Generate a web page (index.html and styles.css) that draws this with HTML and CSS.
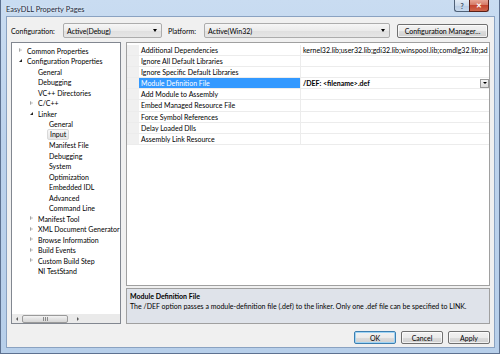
FILE: index.html
```html
<!DOCTYPE html>
<html lang="en">
<head>
  <meta charset="UTF-8">
  <title>EasyDLL Property Pages</title>
  <link rel="stylesheet" href="styles.css">
</head>
<body>
  <div class="window">
    <div class="titlebar">
      <span class="title">EasyDLL Property Pages</span>
      <div class="caption-buttons">
        <span class="cap help">?</span>
        <span class="cap close">&#x2715;</span>
      </div>
    </div>
    <div class="client">
      <div class="config-row">
        <label class="lbl cfg-lbl">Configuration:</label>
        <div class="combo cfg-combo"><span>Active(Debug)</span><span class="arrow"></span></div>
        <label class="lbl plat-lbl">Platform:</label>
        <div class="combo plat-combo"><span>Active(Win32)</span><span class="arrow"></span></div>
        <button class="btn cfg-btn">Configuration Manager...</button>
      </div>

      <div class="main">
        <div class="tree">
          <ul class="tree-items">
            <li class="l0"><span class="tw closed"></span>Common Properties</li>
            <li class="l0"><span class="tw open"></span>Configuration Properties</li>
            <li class="l1"><span class="tw"></span>General</li>
            <li class="l1"><span class="tw"></span>Debugging</li>
            <li class="l1"><span class="tw"></span>VC++ Directories</li>
            <li class="l1"><span class="tw closed"></span>C/C++</li>
            <li class="l1"><span class="tw open"></span>Linker</li>
            <li class="l2"><span class="tw"></span>General</li>
            <li class="l2"><span class="tw"></span><span class="sel">Input</span></li>
            <li class="l2"><span class="tw"></span>Manifest File</li>
            <li class="l2"><span class="tw"></span>Debugging</li>
            <li class="l2"><span class="tw"></span>System</li>
            <li class="l2"><span class="tw"></span>Optimization</li>
            <li class="l2"><span class="tw"></span>Embedded IDL</li>
            <li class="l2"><span class="tw"></span>Advanced</li>
            <li class="l2"><span class="tw"></span>Command Line</li>
            <li class="l1"><span class="tw closed"></span>Manifest Tool</li>
            <li class="l1"><span class="tw closed"></span>XML Document Generator</li>
            <li class="l1"><span class="tw closed"></span>Browse Information</li>
            <li class="l1"><span class="tw closed"></span>Build Events</li>
            <li class="l1"><span class="tw closed"></span>Custom Build Step</li>
            <li class="l1"><span class="tw"></span>NI TestStand</li>
          </ul>
          <div class="hscroll">
            <span class="sarrow left"></span>
            <div class="track"><div class="thumb"><span class="grip"></span></div></div>
            <span class="sarrow right"></span>
          </div>
        </div>

        <div class="right">
          <div class="grid">
            <div class="row"><div class="gutter"></div><div class="name">Additional Dependencies</div><div class="value">kernel32.lib;user32.lib;gdi32.lib;winspool.lib;comdlg32.lib;ad</div></div>
            <div class="row"><div class="gutter"></div><div class="name">Ignore All Default Libraries</div><div class="value"></div></div>
            <div class="row"><div class="gutter"></div><div class="name">Ignore Specific Default Libraries</div><div class="value"></div></div>
            <div class="row selected"><div class="gutter"></div><div class="name">Module Definition File</div><div class="value"><span class="val-text">/DEF: &lt;filename&gt;.def</span><span class="drop"></span></div></div>
            <div class="row"><div class="gutter"></div><div class="name">Add Module to Assembly</div><div class="value"></div></div>
            <div class="row"><div class="gutter"></div><div class="name">Embed Managed Resource File</div><div class="value"></div></div>
            <div class="row"><div class="gutter"></div><div class="name">Force Symbol References</div><div class="value"></div></div>
            <div class="row"><div class="gutter"></div><div class="name">Delay Loaded Dlls</div><div class="value"></div></div>
            <div class="row"><div class="gutter"></div><div class="name">Assembly Link Resource</div><div class="value"></div></div>
          </div>
          <div class="description">
            <div class="desc-title">Module Definition File</div>
            <div class="desc-text">The /DEF option passes a module-definition file (.def) to the linker. Only one .def file can be specified to LINK.</div>
          </div>
        </div>
      </div>

      <div class="buttons">
        <button class="btn default">OK</button>
        <button class="btn">Cancel</button>
        <button class="btn">Apply</button>
      </div>
    </div>
  </div>
</body>
</html>
```

FILE: styles.css
```css
* {
  box-sizing: border-box;
}

html, body {
  margin: 0;
  padding: 0;
}

body {
  width: 500px;
  height: 354px;
  font-family: Lato, 'Open Sans', sans-serif;
  font-size: 7px;
  color: #000;
  overflow: hidden;
}

.window {
  width: 500px;
  height: 354px;
  display: flex;
  flex-direction: column;
  background: linear-gradient(180deg, #c9dcf1 0%, #bcd2ec 40%, #b7cfea 100%);
  border: 1px solid #5d7190;
  border-top: none;
  padding: 0 4px 5px 5px;
}

.titlebar {
  height: 16px;
  display: flex;
  align-items: flex-start;
}

.title {
  margin-top: 5px;
  font-size: 7.4px;
  color: #1e2a3a;
  text-shadow: 0 0 3px rgba(255, 255, 255, 0.9);
}

.caption-buttons {
  margin-left: auto;
  margin-right: 6px;
  display: flex;
}

.cap {
  height: 12px;
  display: flex;
  align-items: center;
  justify-content: center;
  font-size: 7px;
  border: 1px solid #4f6178;
  border-top: none;
}

.help {
  width: 15px;
  border-right: none;
  border-bottom-left-radius: 3px;
  background: linear-gradient(180deg, #e3ecf6 0%, #cbdaeb 50%, #b8cbe2 51%, #c9daee 100%);
  color: #3c4f68;
  font-weight: bold;
}

.close {
  width: 20px;
  border-color: #5a2018;
  border-bottom-right-radius: 3px;
  background: linear-gradient(180deg, #e7a493 0%, #d57a66 45%, #c4452f 50%, #d0674c 100%);
  color: #fff;
  font-size: 6.5px;
  font-weight: bold;
}

.client {
  flex: 1;
  display: flex;
  flex-direction: column;
  background: #f0f0f0;
  border: 1px solid #8aa2c1;
  padding: 6px 4px 3px 4px;
}

/* configuration row */
.config-row {
  height: 15px;
  display: flex;
  align-items: center;
}

.lbl {
  white-space: nowrap;
}

.cfg-lbl {
  width: 52px;
}

.plat-lbl {
  width: 36px;
  margin-left: 6px;
}

.combo {
  height: 15px;
  display: flex;
  align-items: center;
  padding: 0 4px 0 3px;
  border: 1px solid #acacac;
  border-radius: 2px;
  background: linear-gradient(180deg, #f6f6f6 0%, #ebebeb 50%, #dfdfdf 51%, #e6e6e6 100%);
}

.cfg-combo {
  width: 99px;
}

.plat-combo {
  width: 186px;
}

.combo .arrow {
  margin-left: auto;
  width: 0;
  height: 0;
  border-left: 2.5px solid transparent;
  border-right: 2.5px solid transparent;
  border-top: 3px solid #000;
}

.btn {
  font-family: inherit;
  font-size: 7px;
  height: 14px;
  padding: 0;
  border: 1px solid #707070;
  border-radius: 2px;
  background: linear-gradient(180deg, #f2f2f2 0%, #ebebeb 50%, #dddddd 51%, #cfcfcf 100%);
  color: #000;
  box-shadow: inset 0 0 0 1px rgba(255, 255, 255, 0.7);
}

.cfg-btn {
  width: 91px;
  margin-left: 7px;
}

/* main area */
.main {
  flex: 1;
  display: flex;
  margin-top: 4px;
  min-height: 0;
}

.tree {
  width: 110px;
  display: flex;
  flex-direction: column;
  background: #fff;
  border: 1px solid #828790;
}

.tree-items {
  flex: 1;
  list-style: none;
  margin: 0;
  padding: 2.5px 0 0 0;
}

.tree-items li {
  height: 10.5px;
  line-height: 10.5px;
  display: flex;
  align-items: center;
  white-space: nowrap;
}

.l0 { padding-left: 6px; }
.l1 { padding-left: 17px; }
.l2 { padding-left: 28px; }

.tw {
  width: 9px;
  height: 10px;
  flex: none;
  position: relative;
}

.tw.closed::before {
  content: "";
  position: absolute;
  left: 1px;
  top: 2.5px;
  width: 0;
  height: 0;
  border-top: 2.5px solid transparent;
  border-bottom: 2.5px solid transparent;
  border-left: 3px solid #a6a6a6;
}

.tw.closed::after {
  content: "";
  position: absolute;
  left: 1.8px;
  top: 3.6px;
  width: 0;
  height: 0;
  border-top: 1.4px solid transparent;
  border-bottom: 1.4px solid transparent;
  border-left: 1.6px solid #fff;
}

.tw.open::before {
  content: "";
  position: absolute;
  left: 1px;
  top: 3px;
  width: 0;
  height: 0;
  border-left: 3.5px solid transparent;
  border-bottom: 3.5px solid #262626;
}

.sel {
  margin-left: -2px;
  padding: 0 2px;
  line-height: 9px;
  border: 1px solid #d9d9d9;
  border-radius: 2px;
  background: linear-gradient(180deg, #f8f8f8 0%, #e5e5e5 100%);
}

.hscroll {
  height: 9px;
  display: flex;
  align-items: center;
  background: #eaeaea;
  padding: 0 1px;
}

.sarrow {
  width: 9px;
  height: 9px;
  position: relative;
}

.sarrow.left::before,
.sarrow.right::before {
  content: "";
  position: absolute;
  top: 2.5px;
  width: 0;
  height: 0;
  border-top: 2px solid transparent;
  border-bottom: 2px solid transparent;
}

.sarrow.left::before {
  left: 3px;
  border-right: 2.5px solid #5a5a5a;
}

.sarrow.right::before {
  left: 4px;
  border-left: 2.5px solid #5a5a5a;
}

.track {
  flex: 1;
  height: 9px;
  display: flex;
  align-items: center;
}

.thumb {
  width: 100%;
  height: 8px;
  border: 1px solid #9a9a9a;
  border-radius: 2px;
  background: linear-gradient(180deg, #f3f3f3 0%, #e2e2e2 50%, #d6d6d6 100%);
  display: flex;
  align-items: center;
  justify-content: center;
}

.grip {
  width: 5px;
  height: 4px;
  background: repeating-linear-gradient(90deg, #8a8a8a 0 1px, transparent 1px 2px);
}

/* property grid */
.right {
  flex: 1;
  margin-left: 5px;
  display: flex;
  flex-direction: column;
  min-width: 0;
}

.grid {
  flex: 1;
  background: #fff;
  border: 1px solid #a0a0a0;
  padding-top: 2px;
  overflow: hidden;
}

.row {
  height: 11.1px;
  display: flex;
  border-bottom: 1px solid #ececec;
}

.gutter {
  width: 12px;
  flex: none;
  background: #f0f0f0;
}

.name {
  width: 162px;
  flex: none;
  padding-left: 2px;
  line-height: 10px;
  white-space: nowrap;
  border-right: 1px solid #ececec;
}

.value {
  flex: 1;
  min-width: 0;
  display: flex;
  align-items: center;
  padding-left: 2px;
  white-space: nowrap;
  overflow: hidden;
}

.row.selected .name {
  background: #3399ff;
  color: #fff;
}

.val-text {
  font-weight: bold;
}

.drop {
  margin-left: auto;
  width: 9px;
  height: 9px;
  flex: none;
  border: 1px solid #9a9a9a;
  background: linear-gradient(180deg, #f4f4f4 0%, #dcdcdc 100%);
  display: flex;
  align-items: center;
  justify-content: center;
}

.drop::before {
  content: "";
  width: 0;
  height: 0;
  border-left: 2px solid transparent;
  border-right: 2px solid transparent;
  border-top: 2.5px solid #000;
}

.description {
  height: 36px;
  margin-top: 2px;
  border: 1px solid #a0a0a0;
  background: #dfe3ea;
  padding: 2px 3px;
  line-height: 10px;
}

.desc-title {
  font-weight: bold;
}

.desc-text {
  white-space: nowrap;
}

/* dialog buttons */
.buttons {
  display: flex;
  justify-content: flex-end;
  gap: 5px;
  margin-top: 7px;
}

.buttons .btn {
  width: 42px;
  height: 13px;
}

.buttons .btn.default {
  border-color: #3c7fb1;
  box-shadow: inset 0 0 0 1px #9fd4f5;
}
```
